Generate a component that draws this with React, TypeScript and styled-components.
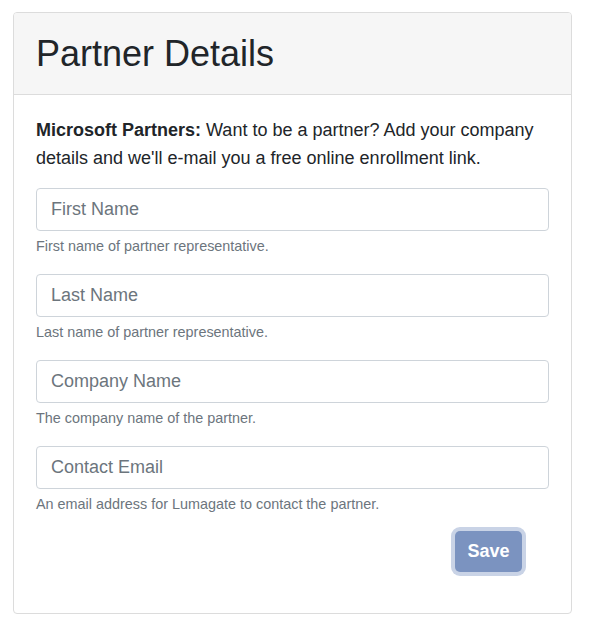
import React from "react";
import styled, { createGlobalStyle } from "styled-components";

const Global = createGlobalStyle`
  html, body { margin: 0; padding: 0; background: #fff; }
  body { font-family: "Liberation Sans", Arial, sans-serif; color: #212529; }
  * { box-sizing: border-box; }
`;

const Page = styled.div`
  padding: 12px 20px 14px 13px;
`;

const Card = styled.div`
  width: 559px;
  border: 1px solid #dcdcdc;
  border-radius: 4px;
  background: #fff;
  overflow: hidden;
`;

const CardHeader = styled.div`
  background: #f6f6f6;
  border-bottom: 1px solid #dcdcdc;
  height: 82px;
  display: flex;
  align-items: center;
  padding: 0 22px;
`;

const Title = styled.h1`
  margin: 0;
  font-size: 36px;
  font-weight: 400;
  color: #212529;
  line-height: 1.2;
`;

const CardBody = styled.div`
  padding: 21px 22px 41px;
`;

const Intro = styled.p`
  margin: 0 0 16px;
  font-size: 18px;
  line-height: 28px;
`;

const Group = styled.div`
  display: flex;
  flex-direction: column;
  margin-bottom: 18px;
`;

const Input = styled.input`
  width: 100%;
  height: 43px;
  border: 1px solid #ced4da;
  border-radius: 4px;
  padding: 0 14px;
  font-family: "Liberation Sans", Arial, sans-serif;
  font-size: 18px;
  color: #495057;
  &::placeholder { color: #6c757d; opacity: 1; }
`;

const Hint = styled.small`
  margin-top: 5px;
  font-size: 14.4px;
  color: #6c757d;
  line-height: 20px;
`;

const Actions = styled.div`
  display: flex;
  justify-content: flex-end;
  padding-right: 27px;
  margin-top: -1px;
`;

const SaveButton = styled.button`
  width: 67px;
  height: 41px;
  border: none;
  border-radius: 5px;
  background: #7b93c0;
  color: #fff;
  font-family: "Liberation Sans", Arial, sans-serif;
  font-size: 18px;
  font-weight: 700;
  box-shadow: 0 0 0 4px #c9d3e6;
  cursor: pointer;
`;

const fields = [
  { ph: "First Name", hint: "First name of partner representative." },
  { ph: "Last Name", hint: "Last name of partner representative." },
  { ph: "Company Name", hint: "The company name of the partner." },
  { ph: "Contact Email", hint: "An email address for Lumagate to contact the partner." },
];

export default function App() {
  return (
    <>
      <Global />
      <Page>
        <Card>
          <CardHeader>
            <Title>Partner Details</Title>
          </CardHeader>
          <CardBody>
            <Intro>
              <b>Microsoft Partners:</b> Want to be a partner? Add your company details and we'll e-mail you a free online enrollment link.
            </Intro>
            {fields.map((f) => (
              <Group key={f.ph}>
                <Input placeholder={f.ph} />
                <Hint>{f.hint}</Hint>
              </Group>
            ))}
            <Actions>
              <SaveButton>Save</SaveButton>
            </Actions>
          </CardBody>
        </Card>
      </Page>
    </>
  );
}
